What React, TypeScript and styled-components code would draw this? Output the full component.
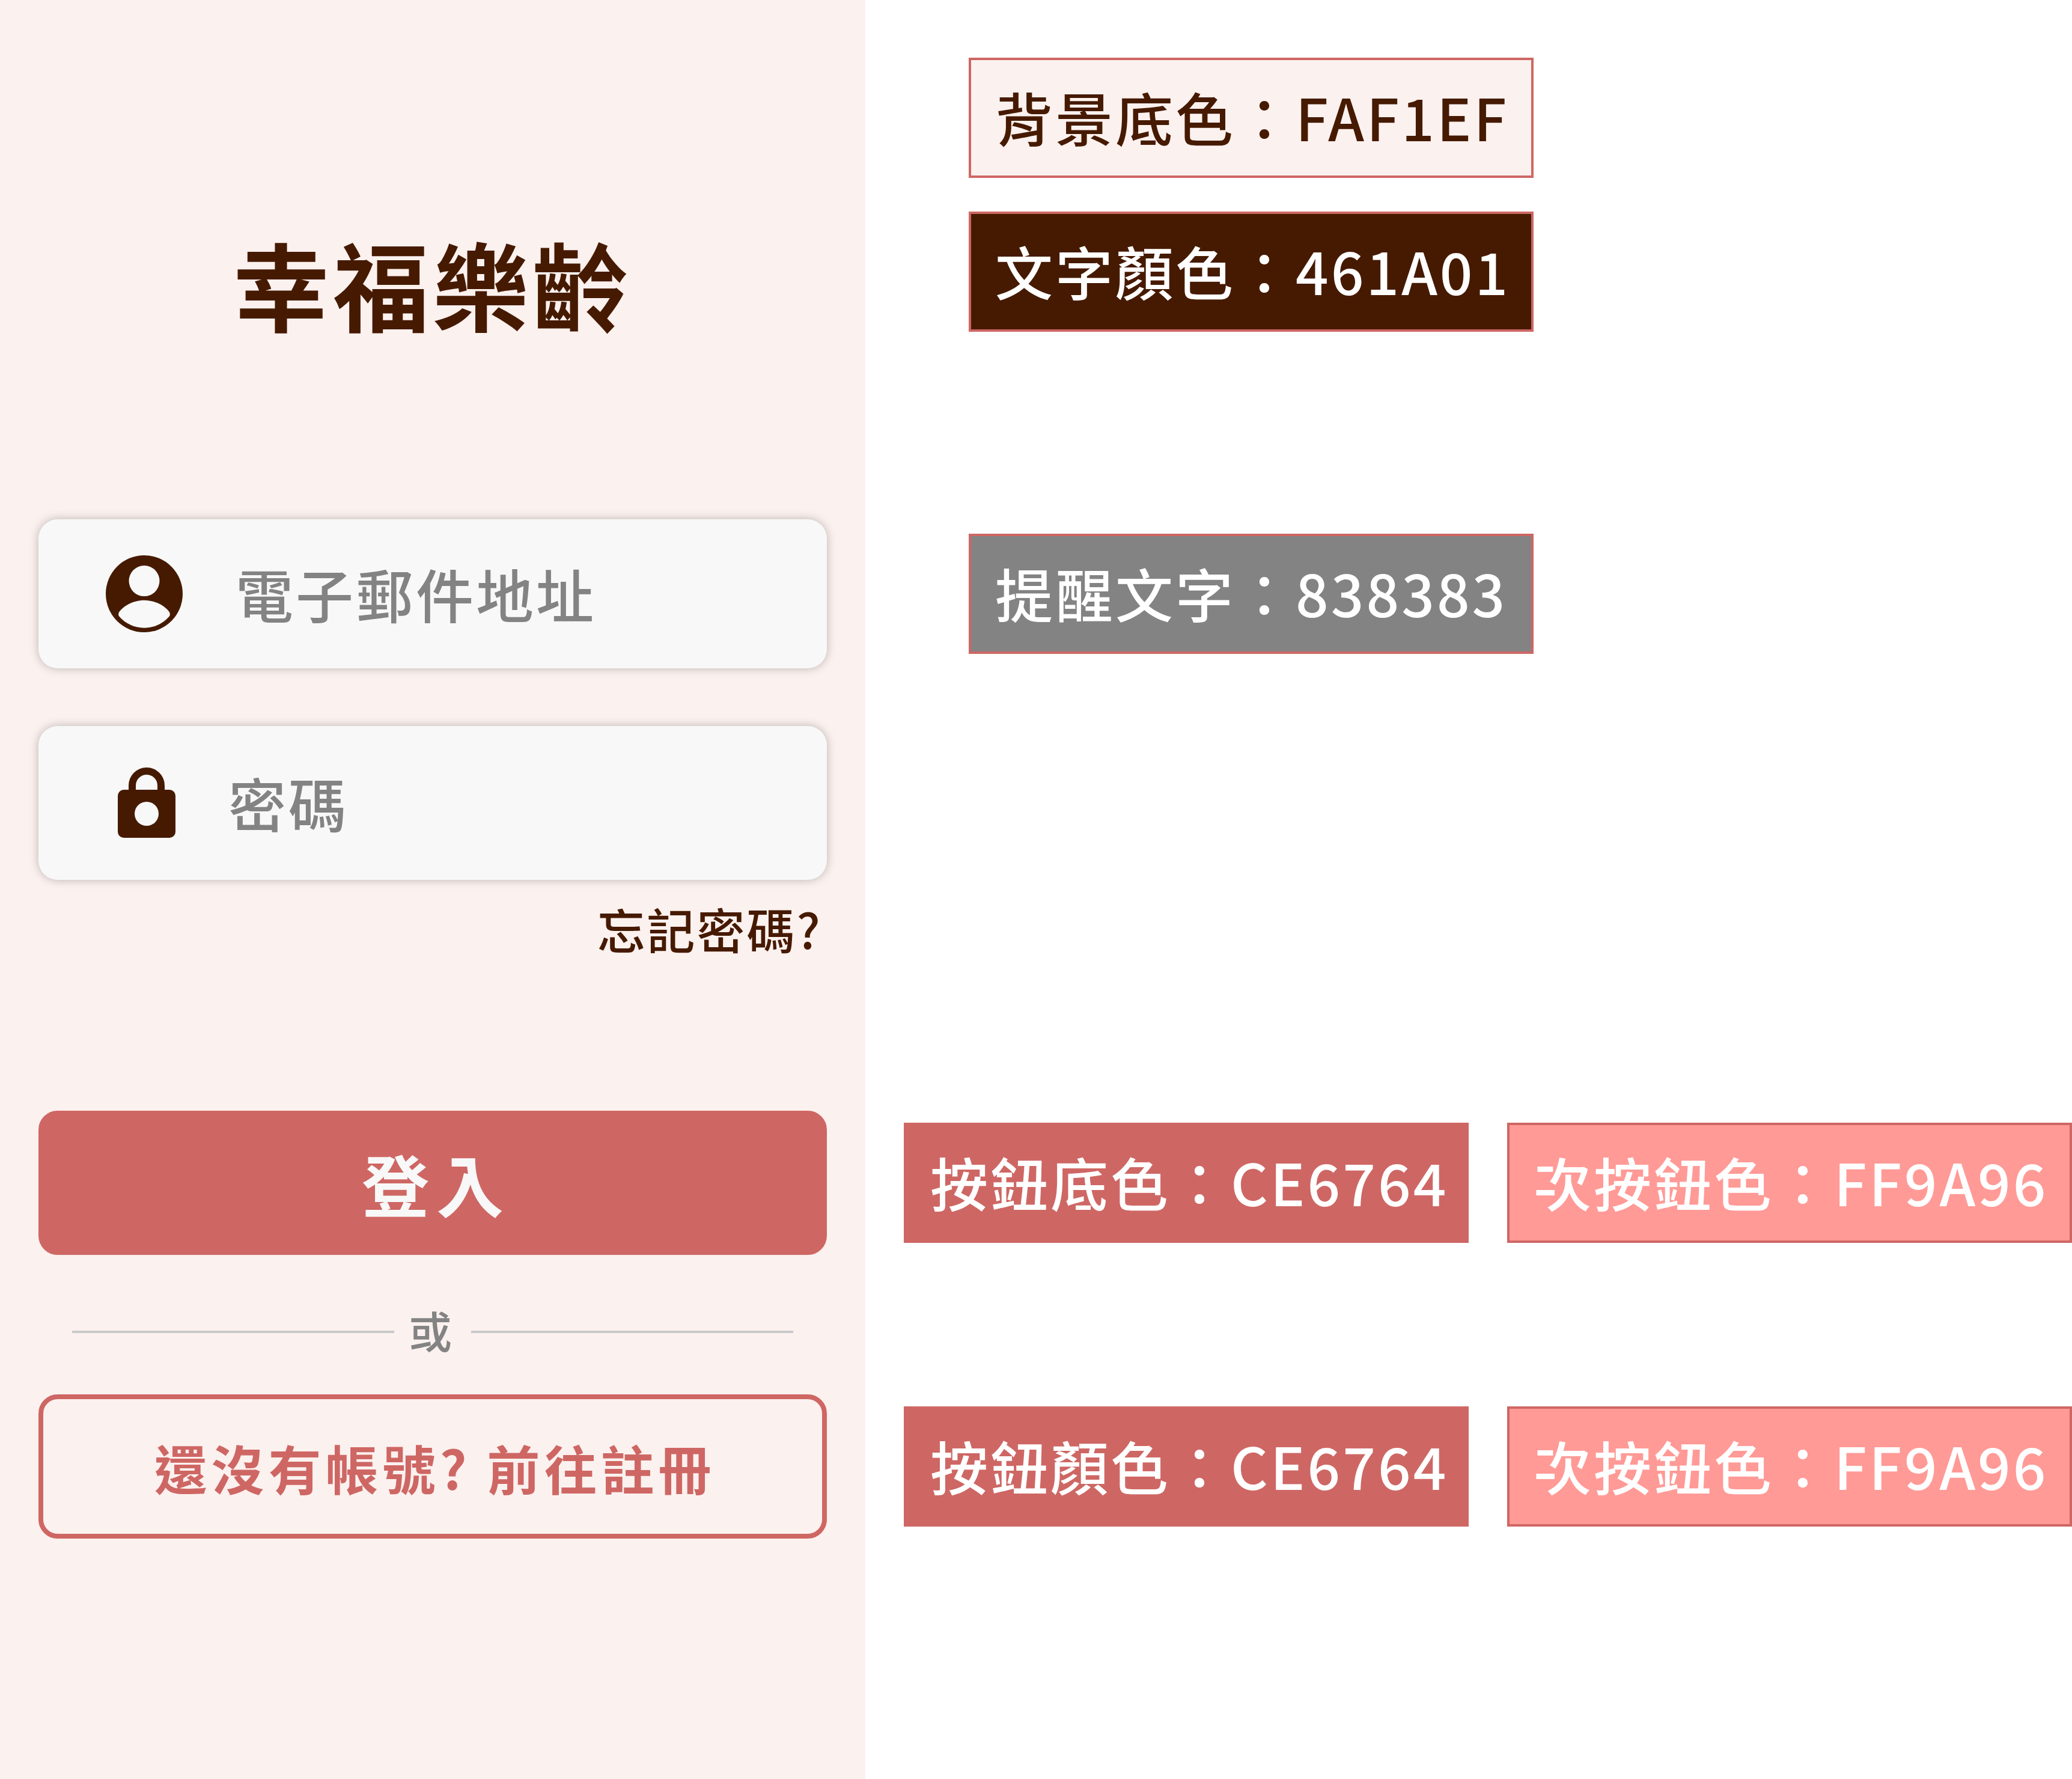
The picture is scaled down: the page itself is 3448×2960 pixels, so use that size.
import React from 'react';
import styled, { createGlobalStyle } from 'styled-components';

const color = {
  background: '#FBF1EF',
  text: '#461A01',
  hint: '#838383',
  button: '#CE6764',
  buttonAlt: '#FF9A96',
  field: '#F8F8F8',
  rule: '#CACACA',
};

const GlobalStyle = createGlobalStyle`
  * { box-sizing: border-box; }
  body {
    margin: 0;
    background: #fff;
    font-family: "Noto Sans CJK TC", "Noto Sans", sans-serif;
    font-weight: 500;
  }
  button, input { font-family: inherit; }
`;

const Page = styled.div`
  display: grid;
  grid-template-columns: minmax(0, 1440fr) minmax(0, 2008fr);
  min-height: 100vh;
`;

const Screen = styled.main`
  padding: 354px 64px 0;
  background: ${color.background};
  color: ${color.text};
`;

const Title = styled.h1`
  margin: 0 0 278px;
  text-align: center;
  font-size: 160px;
  line-height: 232px;
  font-weight: 700;
  letter-spacing: 6px;
`;

const Form = styled.form`
  display: flex;
  flex-direction: column;
`;

const Field = styled.label<{ $height: number; $indent: number }>`
  display: flex;
  align-items: center;
  gap: 88px;
  height: ${(p) => p.$height}px;
  margin-bottom: 96px;
  padding-left: ${(p) => p.$indent}px;
  border-radius: 32px;
  background: ${color.field};
  box-shadow: 0 0 16px rgba(0, 0, 0, 0.25);

  & + & { margin-bottom: 22px; }

  svg { flex: none; display: block; }
`;

const Input = styled.input`
  flex: 1;
  min-width: 0;
  height: 144px;
  padding: 0 0 4px;
  border: 0;
  outline: 0;
  background: transparent;
  color: ${color.text};
  font-size: 96px;
  font-weight: 500;
  letter-spacing: 4px;

  &::placeholder { color: ${color.hint}; opacity: 1; }
`;

const Forgot = styled.a`
  align-self: flex-end;
  margin: 0 8px 246px 0;
  color: ${color.text};
  font-size: 80px;
  line-height: 116px;
  letter-spacing: 3px;
  text-decoration: none;
`;

const Button = styled.button<{ $outline?: boolean }>`
  height: 240px;
  padding: 0;
  border: 8px solid ${color.button};
  border-radius: 32px;
  background: ${(p) => (p.$outline ? 'transparent' : color.button)};
  color: ${(p) => (p.$outline ? color.button : color.field)};
  font-size: ${(p) => (p.$outline ? 88 : 112)}px;
  font-weight: 700;
  letter-spacing: ${(p) => (p.$outline ? 7 : 12)}px;
  text-indent: ${(p) => (p.$outline ? 7 : 12)}px;
  cursor: pointer;
`;

const Divider = styled.div`
  display: flex;
  align-items: center;
  gap: 24px;
  height: 104px;
  margin: 76px 56px 52px;

  &::before, &::after {
    content: '';
    flex: 1;
    height: 4px;
    background: ${color.rule};
  }
`;

const DividerText = styled.span`
  padding: 0 8px 8px 0;
  color: ${color.hint};
  font-size: 72px;
  line-height: 104px;
`;

const Notes = styled.aside`
  display: flex;
  flex-direction: column;
  padding-top: 96px;
`;

const SwatchGroup = styled.div<{ $after: number }>`
  display: flex;
  flex-direction: column;
  gap: 56px;
  width: 940px;
  margin: 0 0 ${(p) => p.$after}px 172px;
`;

const SwatchPair = styled.div<{ $after?: number }>`
  display: grid;
  grid-template-columns: 1fr 1fr;
  gap: 64px;
  margin: 0 0 ${(p) => p.$after ?? 0}px 64px;
`;

const Swatch = styled.div<{ $fill: string; $ink?: string }>`
  height: 200px;
  padding: 24px 0 28px 40px;
  border: 4px solid ${color.button};
  background: ${(p) => p.$fill};
  color: ${(p) => p.$ink ?? '#fff'};
  font-size: 96px;
  line-height: 140px;
  letter-spacing: 4px;
  white-space: nowrap;
`;

const AccountIcon = () => (
  <svg width="128" height="128" viewBox="0 0 128 128" aria-hidden="true">
    <circle cx="64" cy="64" r="64" fill={color.text} />
    <circle cx="64" cy="42.6" r="25.5" fill={color.field} />
    <path
      d="M64 74.700C45 74.700 28 85 21.800 95Q20.600 98 21.800 101C32 113 47 120.700 64 120.700S96 113 106.200 101Q107.400 98 106.200 95C100 85 83 74.700 64 74.700Z"
      fill={color.field}
    />
  </svg>
);

const LockIcon = () => (
  <svg width="96" height="118" viewBox="0 0 96 118" aria-hidden="true">
    <path d="M24 42V30a24 24 0 0 1 48 0v12" fill="none" stroke={color.text} strokeWidth="12" />
    <rect y="37" width="96" height="80" rx="10" fill={color.text} />
    <circle cx="48" cy="77" r="20" fill={color.field} />
  </svg>
);

export default function App() {
  return (
    <Page>
      <GlobalStyle />
      <Screen>
        <Title>幸福樂齡</Title>
        <Form onSubmit={(e) => e.preventDefault()}>
          <Field $height={248} $indent={112}>
            <AccountIcon />
            <Input type="email" placeholder="電子郵件地址" aria-label="電子郵件地址" />
          </Field>
          <Field $height={256} $indent={132}>
            <LockIcon />
            <Input type="password" placeholder="密碼" aria-label="密碼" />
          </Field>
          <Forgot href="#forgot">忘記密碼?</Forgot>
          <Button type="submit">登入</Button>
          <Divider>
            <DividerText>或</DividerText>
          </Divider>
          <Button type="button" $outline>還沒有帳號? 前往註冊</Button>
        </Form>
      </Screen>
      <Notes>
        <SwatchGroup $after={336}>
          <Swatch $fill={color.background} $ink={color.text}>背景底色：FAF1EF</Swatch>
          <Swatch $fill={color.text}>文字顏色：461A01</Swatch>
        </SwatchGroup>
        <SwatchGroup $after={780}>
          <Swatch $fill={color.hint}>提醒文字：838383</Swatch>
        </SwatchGroup>
        <SwatchPair $after={272}>
          <Swatch $fill={color.button}>按鈕底色：CE6764</Swatch>
          <Swatch $fill={color.buttonAlt}>次按鈕色：FF9A96</Swatch>
        </SwatchPair>
        <SwatchPair>
          <Swatch $fill={color.button}>按鈕顏色：CE6764</Swatch>
          <Swatch $fill={color.buttonAlt}>次按鈕色：FF9A96</Swatch>
        </SwatchPair>
      </Notes>
    </Page>
  );
}
